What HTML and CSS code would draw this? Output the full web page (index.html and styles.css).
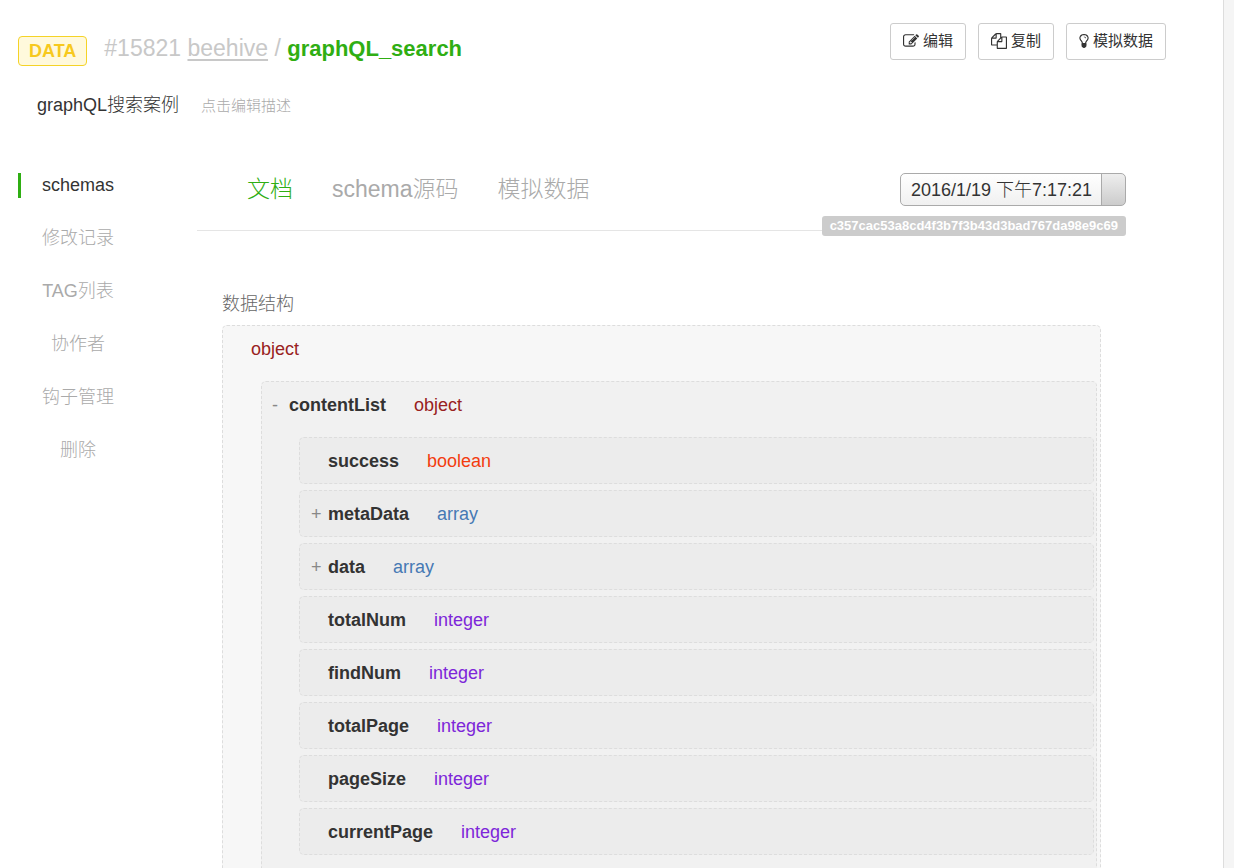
FILE: index.html
```html
<!DOCTYPE html>
<html lang="zh-CN">
<head>
<meta charset="utf-8">
<title>graphQL_search</title>
<link rel="stylesheet" href="styles.css">
</head>
<body>
<div class="page">
  <header class="header">
    <span class="badge">DATA</span>
    <h1 class="title"><span>#15821</span> <a href="#">beehive</a> <span>/</span> <strong>graphQL_search</strong></h1>
    <div class="actions">
      <button type="button" class="btn">
        <svg class="icon" viewBox="0 0 1792 1536" width="16" height="14" aria-hidden="true"><path d="M888 1056l116-116-152-152-116 116v56h96v96h56zm440-720q-16-16-33 1L945 687q-17 17-1 33t33-1l350-350q17-17 1-33zm80 594v190q0 119-84.500 203.500T1120 1408H288q-119 0-203.500-84.500T0 1120V288Q0 169 84.500 84.500T288 0h832q63 0 117 25 15 7 18 23 3 17-9 29l-49 49q-14 14-32 8-23-6-45-6H288q-66 0-113 47t-47 113v832q0 66 47 113t113 47h832q66 0 113-47t47-113V994q0-13 9-22l64-64q15-15 35-7t20 29zm-96-738l288 288-672 672H640V864zm444 132l-92 92-288-288 92-92q28-28 68-28t68 28l152 152q28 28 28 68t-28 68z"/></svg>
        <span>编辑</span>
      </button>
      <button type="button" class="btn">
        <svg class="icon" viewBox="0 0 1792 1792" width="16" height="16" aria-hidden="true"><path d="M1696 384q40 0 68 28t28 68v1216q0 40-28 68t-68 28H736q-40 0-68-28t-28-68v-288H96q-40 0-68-28t-28-68V640q0-40 20-88t48-76L476 68q28-28 76-48t88-20h416q40 0 68 28t28 68v328q68-40 128-40h416zm-544 213L853 896h299V597zM512 213L213 512h299V213zm196 647l316-316V128H640v416q0 40-28 68t-68 28H128v640h512v-256q0-40 20-88t48-76zm956 804V512h-384v416q0 40-28 68t-68 28H768v640h896z"/></svg>
        <span>复制</span>
      </button>
      <button type="button" class="btn">
        <svg class="icon" viewBox="0 0 1024 1536" width="10" height="14" aria-hidden="true"><path d="M736 448q0 13-9.500 22.500T704 480t-22.500-9.500T672 448q0-46-54-71t-106-25q-13 0-22.500-9.500T480 320t9.500-22.500T512 288q50 0 99.500 16t87 54 37.500 90zm160 0q0-72-34.500-134t-90-101.500-123-62T512 128t-136.500 22.500-123 62-90 101.500T128 448q0 101 68 180 10 11 30.500 33t30.500 33q128 153 141 298h228q13-145 141-298 10-11 30.500-33t30.500-33q68-79 68-180zm128 0q0 155-103 268-45 49-74.500 87T787 898.500 753 1006q47 28 47 82 0 37-25 64 25 27 25 64 0 52-45 81 13 23 13 47 0 46-31.500 71t-77.500 25q-20 44-60 70t-87 26-87-26-60-70q-46 0-77.500-25t-31.500-71q0-24 13-47-45-29-45-81 0-37 25-64-25-27-25-64 0-54 47-82-4-50-34-107.500T177.500 803 103 716Q0 603 0 448q0-99 44.500-184.500t117-142 164-89T512 0t186.500 32.500 164 89 117 142T1024 448z"/></svg>
        <span>模拟数据</span>
      </button>
    </div>
  </header>
  <div class="summary">
    <span class="name">graphQL搜索案例</span>
    <span class="hint">点击编辑描述</span>
  </div>
  <div class="body">
    <nav class="side">
      <a class="side-link active" href="#">schemas</a>
      <a class="side-link" href="#">修改记录</a>
      <a class="side-link" href="#">TAG列表</a>
      <a class="side-link" href="#">协作者</a>
      <a class="side-link" href="#">钩子管理</a>
      <a class="side-link" href="#">删除</a>
    </nav>
    <main class="main">
      <div class="toolbar">
        <div class="tabs">
          <a class="tab current" href="#">文档</a>
          <a class="tab" href="#">schema源码</a>
          <a class="tab" href="#">模拟数据</a>
        </div>
        <select class="version" aria-label="版本">
          <option>2016/1/19 下午7:17:21</option>
        </select>
        <span class="hash">c357cac53a8cd4f3b7f3b43d3bad767da98e9c69</span>
      </div>
      <section class="schema">
        <h2 class="heading">数据结构</h2>
        <div class="node root">
          <div class="row"><span class="type object">object</span></div>
          <div class="node nested">
            <div class="row"><button type="button" class="toggle">-</button><b class="key">contentList</b><span class="type object">object</span></div>
            <div class="fields">
              <div class="node field"><div class="row"><b class="key">success</b><span class="type boolean">boolean</span></div></div>
              <div class="node field"><div class="row"><button type="button" class="toggle">+</button><b class="key">metaData</b><span class="type array">array</span></div></div>
              <div class="node field"><div class="row"><button type="button" class="toggle">+</button><b class="key">data</b><span class="type array">array</span></div></div>
              <div class="node field"><div class="row"><b class="key">totalNum</b><span class="type integer">integer</span></div></div>
              <div class="node field"><div class="row"><b class="key">findNum</b><span class="type integer">integer</span></div></div>
              <div class="node field"><div class="row"><b class="key">totalPage</b><span class="type integer">integer</span></div></div>
              <div class="node field"><div class="row"><b class="key">pageSize</b><span class="type integer">integer</span></div></div>
              <div class="node field"><div class="row"><b class="key">currentPage</b><span class="type integer">integer</span></div></div>
            </div>
          </div>
        </div>
      </section>
    </main>
  </div>
</div>
</body>
</html>
```

FILE: styles.css
```css
* {
  box-sizing: border-box;
}

body {
  margin: 0;
  padding-right: 10px;
  background: #f5f5f5;
  color: #333;
  font: 300 18px/25px "Liberation Sans", "Noto Sans CJK SC", sans-serif;
}

button,
select {
  font: inherit;
  color: inherit;
}

a {
  color: inherit;
  text-decoration: none;
}

.page {
  height: 100vh;
  padding: 23px 57px 0 18px;
  overflow-y: auto;
  scrollbar-width: none;
  background: #fff;
  border-right: 1px solid #ddd;
}

.header {
  display: flex;
  align-items: flex-start;
}

.badge {
  margin: 13px 17px 0 0;
  padding: 0 10px;
  border: 1px solid #f5d327;
  border-radius: 4px;
  background: #fff9dc;
  color: #f7c91e;
  font-size: 18px;
  font-weight: bold;
  line-height: 28px;
}

.title {
  margin: 8px 0 0;
  color: #c8c8c8;
  font-size: 23px;
  font-weight: 300;
  line-height: 34px;
}

.title a {
  text-decoration: underline;
  text-decoration-thickness: 2px;
  text-underline-offset: 3px;
}

.title strong {
  color: #2fae13;
  font-size: 22px;
  font-weight: 700;
}

.actions {
  display: flex;
  gap: 12px;
  margin-left: auto;
}

.btn {
  display: flex;
  align-items: center;
  gap: 4px;
  height: 37px;
  padding: 0 12px 2px;
  border: 1px solid #ccc;
  border-radius: 3px;
  background: #fff;
  font-size: 15px;
  font-weight: 400;
}

.icon {
  fill: currentColor;
}

.summary {
  display: flex;
  align-items: center;
  gap: 22px;
  margin-top: 27px;
  padding-left: 19px;
}

.hint {
  color: #aaa;
  font-size: 15px;
}

.body {
  display: flex;
  margin-top: 55px;
  padding-right: 40px;
}

.side {
  display: flex;
  flex-direction: column;
  gap: 28px;
  width: 179px;
  padding-right: 59px;
}

.side-link {
  padding-right: 3px;
  border-left: 3px solid transparent;
  color: #aaa;
  text-align: center;
}

.side-link.active {
  border-left-color: #2fae13;
  color: #333;
}

.main {
  flex: 1;
}

.toolbar {
  position: relative;
  display: flex;
  align-items: flex-start;
  justify-content: space-between;
  height: 58px;
  padding-left: 50px;
  border-bottom: 1px solid #e5e5e5;
}

.tabs {
  display: flex;
  gap: 39px;
  color: #aaa;
  font-size: 23px;
  line-height: 33px;
}

.tab.current {
  color: #2fae13;
}

.version {
  height: 33px;
  padding: 2px 32px 0 10px;
  appearance: none;
  border: 1px solid #aaa;
  border-radius: 5px;
  background:
    linear-gradient(#eee, #ccc) right / 23px 100% no-repeat,
    linear-gradient(#aaa, #aaa) right 23px top / 1px 100% no-repeat,
    linear-gradient(#fff, #f0f0f0);
}

.hash {
  position: absolute;
  right: 0;
  bottom: -6px;
  padding: 0 8px;
  border-radius: 3px;
  background: #ccc;
  color: #fff;
  font-size: 13px;
  font-weight: bold;
  line-height: 20px;
}

.schema {
  padding: 61px 25px 0;
}

.heading {
  margin: 0 0 8px;
  color: #666;
  font-size: 18px;
  font-weight: 300;
}

.node {
  border: 1px dashed #ddd;
  border-radius: 5px;
}

.root {
  padding: 0 3px 20px 38px;
  background: #f7f7f7;
}

.nested {
  margin-top: 10px;
  padding: 0 2px 20px 37px;
  background: #f1f1f1;
}

.fields {
  display: flex;
  flex-direction: column;
  gap: 6px;
  padding-top: 10px;
}

.field {
  padding-left: 28px;
  background: #ececec;
}

.row {
  position: relative;
  display: flex;
  align-items: center;
  gap: 28px;
  height: 45px;
  padding-top: 2px;
}

.root > .row {
  margin-left: -10px;
}

.nested > .row {
  margin-left: -10px;
}

.toggle {
  position: absolute;
  left: -17px;
  padding: 0;
  border: 0;
  background: none;
  color: #888;
}

.key {
  font-weight: bold;
}

.object {
  color: #992121;
}

.boolean {
  color: #f33c10;
}

.array {
  color: #4679b4;
}

.integer {
  color: #7d26d9;
}
```
